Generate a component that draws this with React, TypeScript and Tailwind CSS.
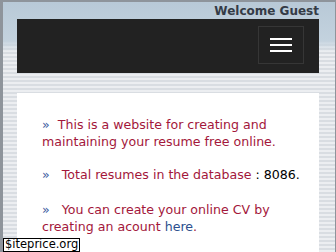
export default function App() {
  return (
    <div className="w-[336px] h-[252px] overflow-hidden relative border-t-2 border-l-[3px] border-r border-[#8e949b] bg-[linear-gradient(to_bottom,#b8c9d7_0px,#c3d2de_38px,rgba(195,210,222,0)_50px),repeating-linear-gradient(to_bottom,#eceef1_0px,#eceef1_2px,#d9dde2_2px,#d9dde2_4px)] font-['DejaVu_Sans',Verdana,sans-serif]">
      {/* Header */}
      <div className="h-[17px] flex justify-end pr-[16px]">
        <span className="text-[12px] leading-[17px] font-bold text-[#343b46] pt-[1px]">Welcome Guest</span>
      </div>
      <nav className="ml-[14px] w-[302px] h-[54px] bg-[#222222] flex items-center justify-end pr-[15px]">
        <button className="w-[46px] h-[38px] border border-[#363636] flex flex-col items-center justify-center gap-[4px] mt-[-2px]">
          <span className="block w-[22px] h-[2px] bg-white" />
          <span className="block w-[22px] h-[2px] bg-white" />
          <span className="block w-[22px] h-[2px] bg-white" />
        </button>
      </nav>

      {/* Content */}
      <div className="ml-[14px] mt-[20px] w-[302px] h-[200px] bg-white pl-[25px] pr-[6px] pt-[23px] text-[12.6px] leading-[17px] text-[#a3173b]">
        <p>
          <span className="text-[#3b5c9f]">»</span>&nbsp;&nbsp;This is a website for creating and maintaining your resume free online.
        </p>
        <p className="mt-[16px]">
          <span className="text-[#3b5c9f]">»</span>&nbsp;&nbsp;&nbsp;Total resumes in the database <span className="text-black">: 8086.</span>
        </p>
        <p className="mt-[18px]">
          <span className="text-[#3b5c9f]">»</span>&nbsp;&nbsp;&nbsp;You can create your online CV by creating an acount <a className="text-[#2c4f8e]">here</a>.
        </p>
      </div>

      {/* Watermark */}
      <div className="absolute left-0 bottom-0 h-[14px] bg-white border border-black flex items-center px-[1px] text-[11.5px] leading-none text-black whitespace-nowrap">
        $iteprice.org
      </div>
    </div>
  );
}
